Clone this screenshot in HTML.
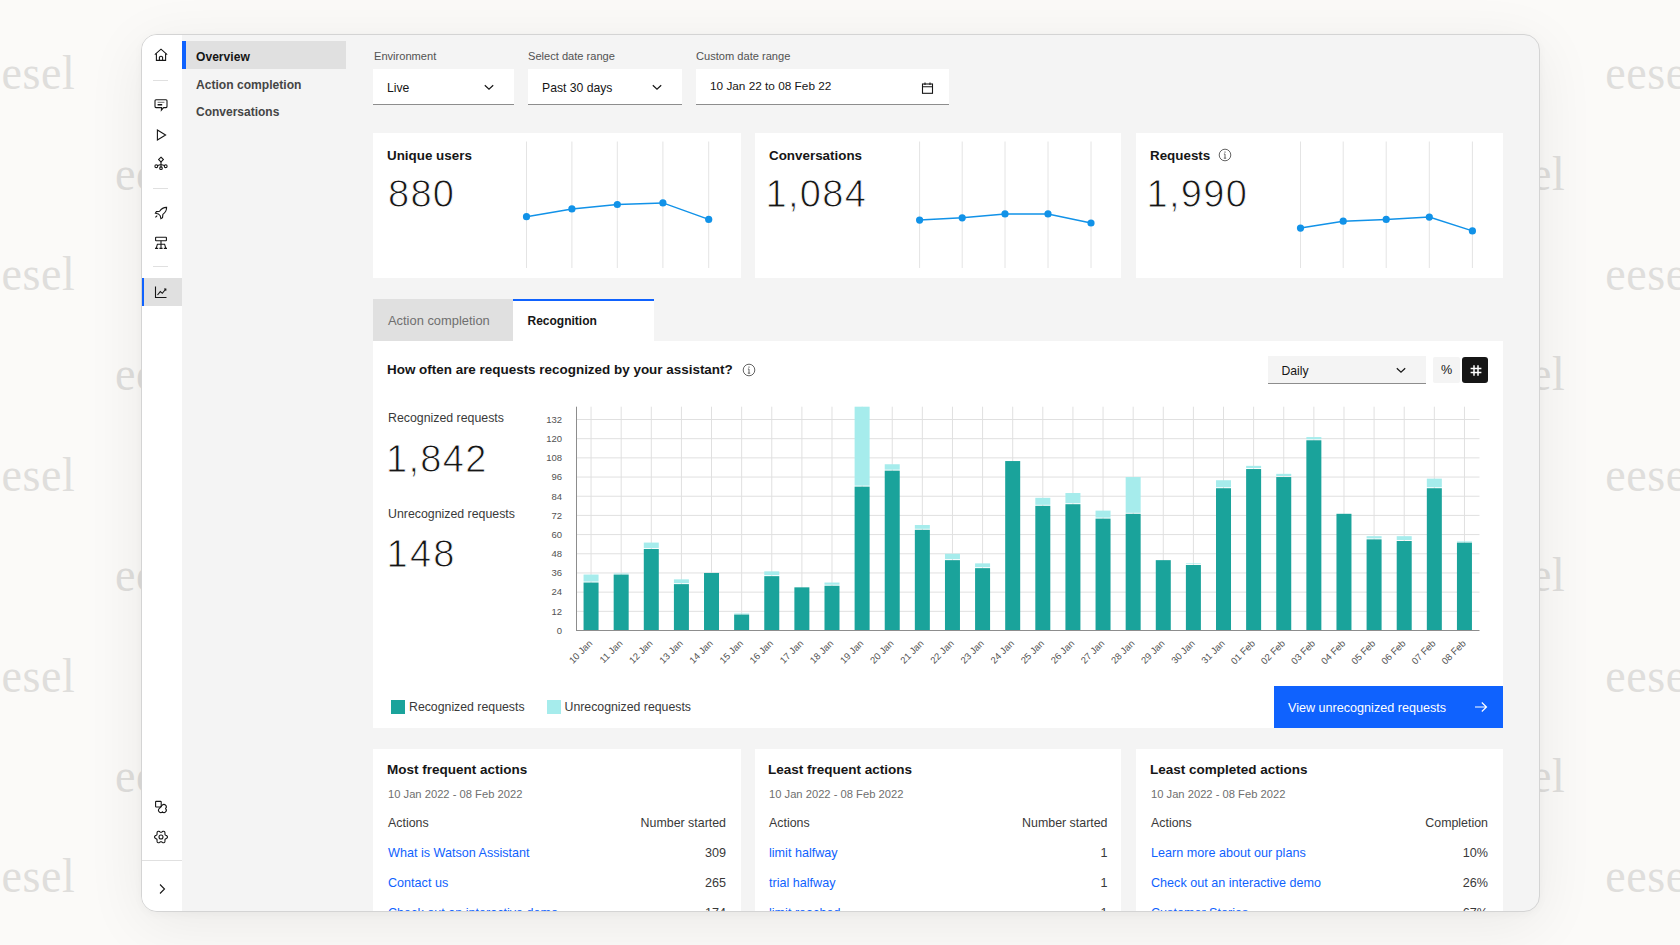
<!DOCTYPE html><html><head><meta charset="utf-8"><style>
*{margin:0;padding:0;box-sizing:border-box}
html,body{width:1680px;height:945px;overflow:hidden}
body{background:#fbfaf8;font-family:"Liberation Sans", sans-serif;position:relative;color:#161616}
.a{position:absolute;white-space:nowrap}
.wm{position:absolute;font-family:"Liberation Serif",serif;font-size:46px;color:#dfdedc;line-height:1;white-space:nowrap;transform:scaleY(1.05);transform-origin:0 37px;letter-spacing:0.6px}
#win{position:absolute;left:141px;top:34px;width:1399px;height:878px;border:1px solid #d4d4d4;border-radius:16px;overflow:hidden;background:#f4f4f4;
  box-shadow:0 12px 60px rgba(0,0,0,0.07), 0 2px 10px rgba(0,0,0,0.03)}
#win .a{}
.t{position:absolute;white-space:nowrap;line-height:1}
</style></head><body>
<div class="wm" style="left:-19.5px;top:51.2px">eesel</div>
<div class="wm" style="left:251.3px;top:51.2px">eesel</div>
<div class="wm" style="left:522.1px;top:51.2px">eesel</div>
<div class="wm" style="left:792.9px;top:51.2px">eesel</div>
<div class="wm" style="left:1063.7px;top:51.2px">eesel</div>
<div class="wm" style="left:1334.5px;top:51.2px">eesel</div>
<div class="wm" style="left:1605.3px;top:51.2px">eesel</div>
<div class="wm" style="left:115.0px;top:151.60000000000002px">eesel</div>
<div class="wm" style="left:386.1px;top:151.60000000000002px">eesel</div>
<div class="wm" style="left:657.2px;top:151.60000000000002px">eesel</div>
<div class="wm" style="left:928.3px;top:151.60000000000002px">eesel</div>
<div class="wm" style="left:1199.4px;top:151.60000000000002px">eesel</div>
<div class="wm" style="left:1470.5px;top:151.60000000000002px">eesel</div>
<div class="wm" style="left:-19.5px;top:252.0px">eesel</div>
<div class="wm" style="left:251.3px;top:252.0px">eesel</div>
<div class="wm" style="left:522.1px;top:252.0px">eesel</div>
<div class="wm" style="left:792.9px;top:252.0px">eesel</div>
<div class="wm" style="left:1063.7px;top:252.0px">eesel</div>
<div class="wm" style="left:1334.5px;top:252.0px">eesel</div>
<div class="wm" style="left:1605.3px;top:252.0px">eesel</div>
<div class="wm" style="left:115.0px;top:352.40000000000003px">eesel</div>
<div class="wm" style="left:386.1px;top:352.40000000000003px">eesel</div>
<div class="wm" style="left:657.2px;top:352.40000000000003px">eesel</div>
<div class="wm" style="left:928.3px;top:352.40000000000003px">eesel</div>
<div class="wm" style="left:1199.4px;top:352.40000000000003px">eesel</div>
<div class="wm" style="left:1470.5px;top:352.40000000000003px">eesel</div>
<div class="wm" style="left:-19.5px;top:452.8px">eesel</div>
<div class="wm" style="left:251.3px;top:452.8px">eesel</div>
<div class="wm" style="left:522.1px;top:452.8px">eesel</div>
<div class="wm" style="left:792.9px;top:452.8px">eesel</div>
<div class="wm" style="left:1063.7px;top:452.8px">eesel</div>
<div class="wm" style="left:1334.5px;top:452.8px">eesel</div>
<div class="wm" style="left:1605.3px;top:452.8px">eesel</div>
<div class="wm" style="left:115.0px;top:553.2px">eesel</div>
<div class="wm" style="left:386.1px;top:553.2px">eesel</div>
<div class="wm" style="left:657.2px;top:553.2px">eesel</div>
<div class="wm" style="left:928.3px;top:553.2px">eesel</div>
<div class="wm" style="left:1199.4px;top:553.2px">eesel</div>
<div class="wm" style="left:1470.5px;top:553.2px">eesel</div>
<div class="wm" style="left:-19.5px;top:653.6000000000001px">eesel</div>
<div class="wm" style="left:251.3px;top:653.6000000000001px">eesel</div>
<div class="wm" style="left:522.1px;top:653.6000000000001px">eesel</div>
<div class="wm" style="left:792.9px;top:653.6000000000001px">eesel</div>
<div class="wm" style="left:1063.7px;top:653.6000000000001px">eesel</div>
<div class="wm" style="left:1334.5px;top:653.6000000000001px">eesel</div>
<div class="wm" style="left:1605.3px;top:653.6000000000001px">eesel</div>
<div class="wm" style="left:115.0px;top:754.0000000000001px">eesel</div>
<div class="wm" style="left:386.1px;top:754.0000000000001px">eesel</div>
<div class="wm" style="left:657.2px;top:754.0000000000001px">eesel</div>
<div class="wm" style="left:928.3px;top:754.0000000000001px">eesel</div>
<div class="wm" style="left:1199.4px;top:754.0000000000001px">eesel</div>
<div class="wm" style="left:1470.5px;top:754.0000000000001px">eesel</div>
<div class="wm" style="left:-19.5px;top:854.4000000000001px">eesel</div>
<div class="wm" style="left:251.3px;top:854.4000000000001px">eesel</div>
<div class="wm" style="left:522.1px;top:854.4000000000001px">eesel</div>
<div class="wm" style="left:792.9px;top:854.4000000000001px">eesel</div>
<div class="wm" style="left:1063.7px;top:854.4000000000001px">eesel</div>
<div class="wm" style="left:1334.5px;top:854.4000000000001px">eesel</div>
<div class="wm" style="left:1605.3px;top:854.4000000000001px">eesel</div>
<div class="wm" style="left:115.0px;top:954.8000000000001px">eesel</div>
<div class="wm" style="left:386.1px;top:954.8000000000001px">eesel</div>
<div class="wm" style="left:657.2px;top:954.8000000000001px">eesel</div>
<div class="wm" style="left:928.3px;top:954.8000000000001px">eesel</div>
<div class="wm" style="left:1199.4px;top:954.8000000000001px">eesel</div>
<div class="wm" style="left:1470.5px;top:954.8000000000001px">eesel</div>
<div id="win">
<div class="a" style="left:0px;top:0px;width:40px;height:877px;background:#ffffff;"></div>
<div class="a" style="left:2px;top:243px;width:38px;height:28px;background:#e0e0e0;"></div>
<div class="a" style="left:0px;top:243px;width:2px;height:28px;background:#0f62fe;"></div>
<div class="a" style="left:11px;top:45px;width:15px;height:1px;background:#e0e0e0;"></div>
<div class="a" style="left:11px;top:153px;width:15px;height:1px;background:#e0e0e0;"></div>
<div class="a" style="left:11px;top:231px;width:15px;height:1px;background:#e0e0e0;"></div>
<div class="a" style="left:0px;top:825px;width:40px;height:1px;background:#e0e0e0;"></div>
<svg class="a" style="left:11.0px;top:12.0px" width="16" height="16" viewBox="0 0 16 16" fill="none" stroke="#161616" stroke-width="1.1"><path d="M1.8 7.6 L8 2.2 L14.2 7.6"/><path d="M3.4 6.4 V13.4 H12.6 V6.4"/><path d="M6.4 13.4 V10.2 Q8 8.2 9.6 10.2 V13.4"/></svg>
<svg class="a" style="left:11.0px;top:62.0px" width="16" height="16" viewBox="0 0 16 16" fill="none" stroke="#161616" stroke-width="1.1"><path d="M3 2.8 H13 Q14 2.8 14 3.8 V9.6 Q14 10.6 13 10.6 H10.6 L8.4 13.2 L8.6 10.6 H3 Q2 10.6 2 9.6 V3.8 Q2 2.8 3 2.8 Z"/><path d="M4.6 5.4 H11.4" stroke="#8d8d8d"/><path d="M4.6 7.8 H9.2" stroke-width="1.4"/></svg>
<svg class="a" style="left:11.0px;top:92.0px" width="16" height="16" viewBox="0 0 16 16" fill="none" stroke="#161616" stroke-width="1.1"><path d="M4.4 3 L12.6 8 L4.4 13 Z"/></svg>
<svg class="a" style="left:11.0px;top:120.0px" width="16" height="16" viewBox="0 0 16 16" fill="none" stroke="#161616" stroke-width="1.1"><path d="M8 2.2 L10.4 4.6 L8 7 L5.6 4.6 Z"/><path d="M8 7 V12.5 M8 9.5 L3.8 10.8 M8 9.5 L12.2 10.8"/><circle cx="3.3" cy="11.2" r="1.4"/><circle cx="12.7" cy="11.2" r="1.4"/><circle cx="8" cy="13.2" r="1.3"/></svg>
<svg class="a" style="left:11.0px;top:170.0px" width="16" height="16" viewBox="0 0 16 16" fill="none" stroke="#161616" stroke-width="1.1"><path d="M13.6 2.4 Q9.5 2.2 6.6 6.2 L3.4 6.6 L2.4 8.2 L5.4 8.9 L7.2 10.7 L7.9 13.6 L9.5 12.6 L9.9 9.4 Q13.8 6.5 13.6 2.4 Z"/><path d="M2.4 12.4 L4.2 10.6"/></svg>
<svg class="a" style="left:11.0px;top:200.0px" width="16" height="16" viewBox="0 0 16 16" fill="none" stroke="#161616" stroke-width="1.1"><rect x="2.6" y="2.3" width="10.8" height="3.4" rx="0.5"/><path d="M8 5.7 V13.4"/><path d="M3.2 13.4 L4.4 9.2 H11.6 L12.8 13.4"/><path d="M2 13.4 H5.2 M6.4 13.4 H9.6 M10.8 13.4 H14"/></svg>
<svg class="a" style="left:11.0px;top:249.0px" width="16" height="16" viewBox="0 0 16 16" fill="none" stroke="#161616" stroke-width="1.1"><path d="M2.5 2.5 V13.5 H13.5"/><path d="M4.5 11 L7.3 7.6 L9.3 9.3 L12.8 5"/><path d="M11 5 H12.8 V6.8"/></svg>
<svg class="a" style="left:11.0px;top:764.0px" width="16" height="16" viewBox="0 0 16 16" fill="none" stroke="#161616" stroke-width="1.1"><rect x="2.6" y="2.4" width="5.6" height="5.6" rx="0.6"/><path d="M9.2 6.2 Q11 4.6 12.6 6.2 Q14.2 8 12.6 9.6 Q14.2 11.2 12.6 12.8 Q11 14.4 9.4 12.8 Q7.8 14.4 6.2 12.8 Q4.6 11.2 6.2 9.6 Q7.8 8 9.2 6.2 Z"/></svg>
<svg class="a" style="left:11.0px;top:794.0px" width="16" height="16" viewBox="0 0 16 16" fill="none" stroke="#161616" stroke-width="1.1"><path d="M14.50 8.00 L14.36 8.56 L13.96 9.05 L13.41 9.45 L12.84 9.76 L12.37 10.04 L12.07 10.35 L11.95 10.76 L11.95 11.31 L11.96 11.96 L11.89 12.63 L11.66 13.23 L11.25 13.63 L10.70 13.78 L10.07 13.69 L9.45 13.41 L8.89 13.07 L8.42 12.80 L8.00 12.70 L7.58 12.80 L7.11 13.07 L6.55 13.41 L5.93 13.69 L5.30 13.78 L4.75 13.63 L4.34 13.23 L4.11 12.63 L4.04 11.96 L4.05 11.31 L4.05 10.76 L3.93 10.35 L3.63 10.04 L3.16 9.76 L2.59 9.45 L2.04 9.05 L1.64 8.56 L1.50 8.00 L1.64 7.44 L2.04 6.95 L2.59 6.55 L3.16 6.24 L3.63 5.96 L3.93 5.65 L4.05 5.24 L4.05 4.69 L4.04 4.04 L4.11 3.37 L4.34 2.77 L4.75 2.37 L5.30 2.22 L5.93 2.31 L6.55 2.59 L7.11 2.93 L7.58 3.20 L8.00 3.30 L8.42 3.20 L8.89 2.93 L9.45 2.59 L10.07 2.31 L10.70 2.22 L11.25 2.37 L11.66 2.77 L11.89 3.37 L11.96 4.04 L11.95 4.69 L11.95 5.24 L12.07 5.65 L12.37 5.96 L12.84 6.24 L13.41 6.55 L13.96 6.95 L14.36 7.44 Z"/><circle cx="8" cy="8" r="2"/></svg>
<svg class="a" style="left:12.0px;top:846.0px" width="16" height="16" viewBox="0 0 16 16" fill="none" stroke="#161616" stroke-width="1.1"><path d="M6 3.5 L10.5 8 L6 12.5"/></svg>
<div class="a" style="left:44px;top:6px;width:160px;height:28px;background:#e0e0e0;"></div>
<div class="a" style="left:40px;top:6px;width:4px;height:28px;background:#0f62fe;"></div>
<div class="t" style="left:54.00px;top:15.76px;font-size:12.1px;color:#161616;font-weight:bold;">Overview</div>
<div class="t" style="left:54.00px;top:43.76px;font-size:12.1px;color:#454545;font-weight:bold;">Action completion</div>
<div class="t" style="left:54.00px;top:70.84px;font-size:12px;color:#454545;font-weight:bold;">Conversations</div>
<div class="t" style="left:232.00px;top:15.60px;font-size:11.1px;color:#525252;font-weight:normal;">Environment</div>
<div class="t" style="left:386.00px;top:15.60px;font-size:11.1px;color:#525252;font-weight:normal;">Select date range</div>
<div class="t" style="left:554.00px;top:15.60px;font-size:11.1px;color:#525252;font-weight:normal;">Custom date range</div>
<div class="a" style="left:231px;top:34px;width:141px;height:36px;background:#ffffff;border-bottom:1px solid #8d8d8d"></div>
<div class="a" style="left:386px;top:34px;width:154px;height:36px;background:#ffffff;border-bottom:1px solid #8d8d8d"></div>
<div class="a" style="left:554px;top:34px;width:253px;height:36px;background:#ffffff;border-bottom:1px solid #8d8d8d"></div>
<div class="t" style="left:245.00px;top:46.67px;font-size:12.2px;color:#161616;font-weight:normal;">Live</div>
<div class="t" style="left:400.00px;top:46.67px;font-size:12.2px;color:#161616;font-weight:normal;">Past 30 days</div>
<div class="t" style="left:568.00px;top:46.01px;font-size:11.8px;color:#161616;font-weight:normal;">10 Jan 22 to 08 Feb 22</div>
<svg class="a" style="left:342.0px;top:47.0px" width="10" height="10" viewBox="0 0 10 10" fill="none" stroke="#161616" stroke-width="1.2"><path d="M0.8 3.2 L5 7.2 L9.2 3.2"/></svg>
<svg class="a" style="left:510.0px;top:47.0px" width="10" height="10" viewBox="0 0 10 10" fill="none" stroke="#161616" stroke-width="1.2"><path d="M0.8 3.2 L5 7.2 L9.2 3.2"/></svg>
<svg class="a" style="left:779px;top:47px" width="13" height="12" viewBox="0 0 13 12" fill="none" stroke="#161616" stroke-width="1.1"><rect x="1.5" y="2" width="10" height="9.3"/><path d="M1.5 4.8 H11.5 M4 0.5 V3 M9 0.5 V3"/></svg>
<div class="a" style="left:231px;top:98px;width:368px;height:145px;background:#ffffff;"></div>
<div class="t" style="left:245.00px;top:114.46px;font-size:13.4px;color:#161616;font-weight:bold;">Unique users</div>
<div class="t" style="left:246.00px;top:139.53px;font-size:38px;color:#161616;font-weight:normal;letter-spacing:1.3px;-webkit-text-stroke:0.9px #fff">880</div>
<svg class="a" style="left:231px;top:98px" width="368" height="145" viewBox="373 133 368 145"><line x1="526.5" y1="141.5" x2="526.5" y2="268" stroke="#e4e4e4" stroke-width="1"/><line x1="571.9" y1="141.5" x2="571.9" y2="268" stroke="#e4e4e4" stroke-width="1"/><line x1="617.3" y1="141.5" x2="617.3" y2="268" stroke="#e4e4e4" stroke-width="1"/><line x1="662.9" y1="141.5" x2="662.9" y2="268" stroke="#e4e4e4" stroke-width="1"/><line x1="708.7" y1="141.5" x2="708.7" y2="268" stroke="#e4e4e4" stroke-width="1"/><polyline points="526.5,216.7 571.9,208.9 617.3,204.5 662.9,202.9 708.7,219.4" fill="none" stroke="#1192e8" stroke-width="1.5"/><circle cx="526.5" cy="216.7" r="3.6" fill="#1192e8"/><circle cx="571.9" cy="208.9" r="3.6" fill="#1192e8"/><circle cx="617.3" cy="204.5" r="3.6" fill="#1192e8"/><circle cx="662.9" cy="202.9" r="3.6" fill="#1192e8"/><circle cx="708.7" cy="219.4" r="3.6" fill="#1192e8"/></svg>
<div class="a" style="left:613px;top:98px;width:366px;height:145px;background:#ffffff;"></div>
<div class="t" style="left:627.00px;top:114.46px;font-size:13.4px;color:#161616;font-weight:bold;">Conversations</div>
<div class="t" style="left:623.50px;top:139.53px;font-size:38px;color:#161616;font-weight:normal;letter-spacing:1.3px;-webkit-text-stroke:0.9px #fff">1,084</div>
<svg class="a" style="left:613px;top:98px" width="366" height="145" viewBox="755 133 366 145"><line x1="919.6" y1="141.5" x2="919.6" y2="268" stroke="#e4e4e4" stroke-width="1"/><line x1="962.2" y1="141.5" x2="962.2" y2="268" stroke="#e4e4e4" stroke-width="1"/><line x1="1005" y1="141.5" x2="1005" y2="268" stroke="#e4e4e4" stroke-width="1"/><line x1="1048" y1="141.5" x2="1048" y2="268" stroke="#e4e4e4" stroke-width="1"/><line x1="1091" y1="141.5" x2="1091" y2="268" stroke="#e4e4e4" stroke-width="1"/><polyline points="919.6,220.1 962.2,217.8 1005,213.9 1048,213.9 1091,223" fill="none" stroke="#1192e8" stroke-width="1.5"/><circle cx="919.6" cy="220.1" r="3.6" fill="#1192e8"/><circle cx="962.2" cy="217.8" r="3.6" fill="#1192e8"/><circle cx="1005" cy="213.9" r="3.6" fill="#1192e8"/><circle cx="1048" cy="213.9" r="3.6" fill="#1192e8"/><circle cx="1091" cy="223" r="3.6" fill="#1192e8"/></svg>
<div class="a" style="left:994px;top:98px;width:367px;height:145px;background:#ffffff;"></div>
<div class="t" style="left:1008.00px;top:114.46px;font-size:13.4px;color:#161616;font-weight:bold;">Requests</div>
<div class="t" style="left:1004.50px;top:139.53px;font-size:38px;color:#161616;font-weight:normal;letter-spacing:1.3px;-webkit-text-stroke:0.9px #fff">1,990</div>
<svg class="a" style="left:994px;top:98px" width="367" height="145" viewBox="1136 133 367 145"><line x1="1300.5" y1="141.5" x2="1300.5" y2="268" stroke="#e4e4e4" stroke-width="1"/><line x1="1343.2" y1="141.5" x2="1343.2" y2="268" stroke="#e4e4e4" stroke-width="1"/><line x1="1386.2" y1="141.5" x2="1386.2" y2="268" stroke="#e4e4e4" stroke-width="1"/><line x1="1429.3" y1="141.5" x2="1429.3" y2="268" stroke="#e4e4e4" stroke-width="1"/><line x1="1472.4" y1="141.5" x2="1472.4" y2="268" stroke="#e4e4e4" stroke-width="1"/><polyline points="1300.5,228.1 1343.2,221.2 1386.2,219.4 1429.3,217.1 1472.4,230.9" fill="none" stroke="#1192e8" stroke-width="1.5"/><circle cx="1300.5" cy="228.1" r="3.6" fill="#1192e8"/><circle cx="1343.2" cy="221.2" r="3.6" fill="#1192e8"/><circle cx="1386.2" cy="219.4" r="3.6" fill="#1192e8"/><circle cx="1429.3" cy="217.1" r="3.6" fill="#1192e8"/><circle cx="1472.4" cy="230.9" r="3.6" fill="#1192e8"/></svg>
<svg class="a" style="left:1076px;top:113px" width="14" height="14" viewBox="0 0 14 14" fill="none" stroke="#525252" stroke-width="0.9"><circle cx="7" cy="7" r="5.8"/><path d="M7 6 V10.2 M5.8 10.2 H8.2 M5.9 6 H7"/><circle cx="7" cy="4" r="0.6" fill="#161616" stroke="none"/></svg>
<div class="a" style="left:231px;top:264px;width:140px;height:42px;background:#e0e0e0;"></div>
<div class="a" style="left:371px;top:264px;width:141px;height:42px;background:#ffffff;border-top:2px solid #0f62fe"></div>
<div class="t" style="left:246.00px;top:279.88px;font-size:12.9px;color:#6f6f6f;font-weight:normal;">Action completion</div>
<div class="t" style="left:385.50px;top:279.84px;font-size:12.0px;color:#161616;font-weight:bold;">Recognition</div>
<div class="a" style="left:231px;top:306px;width:1130px;height:387px;background:#ffffff;"></div>
<div class="t" style="left:245.00px;top:327.91px;font-size:13.45px;color:#161616;font-weight:bold;">How often are requests recognized by your assistant?</div>
<svg class="a" style="left:599.5px;top:328px" width="14" height="14" viewBox="0 0 14 14" fill="none" stroke="#525252" stroke-width="0.9"><circle cx="7" cy="7" r="5.8"/><path d="M7 6 V10.2 M5.8 10.2 H8.2 M5.9 6 H7"/><circle cx="7" cy="4" r="0.6" fill="#161616" stroke="none"/></svg>
<div class="a" style="left:1126px;top:321px;width:158px;height:28px;background:#f4f4f4;border-bottom:1px solid #8d8d8d"></div>
<div class="t" style="left:1139.50px;top:329.67px;font-size:12.2px;color:#161616;font-weight:normal;">Daily</div>
<svg class="a" style="left:1254.0px;top:330.0px" width="10" height="10" viewBox="0 0 10 10" fill="none" stroke="#161616" stroke-width="1.2"><path d="M0.8 3.2 L5 7.2 L9.2 3.2"/></svg>
<div class="a" style="left:1291px;top:322px;width:27px;height:26px;background:#f4f4f4;border-radius:2px"></div>
<div class="a" style="left:1320px;top:322px;width:26px;height:26px;background:#161616;border-radius:3px"></div>
<div class="t" style="left:1299.00px;top:329.33px;font-size:12.6px;color:#161616;font-weight:normal;">%</div>
<svg class="a" style="left:1328px;top:330px" width="12" height="11" viewBox="0 0 12 11" fill="none" stroke="#ffffff" stroke-width="1.5"><path d="M4 0.3 V10.7 M8 0.3 V10.7 M0.6 3.5 H11.4 M0.6 7.5 H11.4"/></svg>
<div class="t" style="left:246.00px;top:376.75px;font-size:12.35px;color:#393939;font-weight:normal;">Recognized requests</div>
<div class="t" style="left:244.00px;top:405.03px;font-size:38px;color:#161616;font-weight:normal;letter-spacing:1.3px;-webkit-text-stroke:0.9px #fff">1,842</div>
<div class="t" style="left:246.00px;top:472.75px;font-size:12.35px;color:#393939;font-weight:normal;">Unrecognized requests</div>
<div class="t" style="left:244.50px;top:499.63px;font-size:38px;color:#161616;font-weight:normal;letter-spacing:2.3px;-webkit-text-stroke:0.9px #fff">148</div>
<svg class="a" style="left:0px;top:0px" width="1399" height="878" viewBox="142 35 1399 878"><line x1="576" y1="611.32" x2="1479.5" y2="611.32" stroke="#e0e0e0" stroke-width="1"/><line x1="576" y1="592.13" x2="1479.5" y2="592.13" stroke="#e0e0e0" stroke-width="1"/><line x1="576" y1="572.95" x2="1479.5" y2="572.95" stroke="#e0e0e0" stroke-width="1"/><line x1="576" y1="553.77" x2="1479.5" y2="553.77" stroke="#e0e0e0" stroke-width="1"/><line x1="576" y1="534.59" x2="1479.5" y2="534.59" stroke="#e0e0e0" stroke-width="1"/><line x1="576" y1="515.40" x2="1479.5" y2="515.40" stroke="#e0e0e0" stroke-width="1"/><line x1="576" y1="496.22" x2="1479.5" y2="496.22" stroke="#e0e0e0" stroke-width="1"/><line x1="576" y1="477.04" x2="1479.5" y2="477.04" stroke="#e0e0e0" stroke-width="1"/><line x1="576" y1="457.85" x2="1479.5" y2="457.85" stroke="#e0e0e0" stroke-width="1"/><line x1="576" y1="438.67" x2="1479.5" y2="438.67" stroke="#e0e0e0" stroke-width="1"/><line x1="576" y1="419.49" x2="1479.5" y2="419.49" stroke="#e0e0e0" stroke-width="1"/><line x1="591.06" y1="406.7" x2="591.06" y2="630.5" stroke="#e0e0e0" stroke-width="1"/><line x1="621.17" y1="406.7" x2="621.17" y2="630.5" stroke="#e0e0e0" stroke-width="1"/><line x1="651.29" y1="406.7" x2="651.29" y2="630.5" stroke="#e0e0e0" stroke-width="1"/><line x1="681.41" y1="406.7" x2="681.41" y2="630.5" stroke="#e0e0e0" stroke-width="1"/><line x1="711.52" y1="406.7" x2="711.52" y2="630.5" stroke="#e0e0e0" stroke-width="1"/><line x1="741.64" y1="406.7" x2="741.64" y2="630.5" stroke="#e0e0e0" stroke-width="1"/><line x1="771.76" y1="406.7" x2="771.76" y2="630.5" stroke="#e0e0e0" stroke-width="1"/><line x1="801.88" y1="406.7" x2="801.88" y2="630.5" stroke="#e0e0e0" stroke-width="1"/><line x1="831.99" y1="406.7" x2="831.99" y2="630.5" stroke="#e0e0e0" stroke-width="1"/><line x1="862.11" y1="406.7" x2="862.11" y2="630.5" stroke="#e0e0e0" stroke-width="1"/><line x1="892.23" y1="406.7" x2="892.23" y2="630.5" stroke="#e0e0e0" stroke-width="1"/><line x1="922.34" y1="406.7" x2="922.34" y2="630.5" stroke="#e0e0e0" stroke-width="1"/><line x1="952.46" y1="406.7" x2="952.46" y2="630.5" stroke="#e0e0e0" stroke-width="1"/><line x1="982.58" y1="406.7" x2="982.58" y2="630.5" stroke="#e0e0e0" stroke-width="1"/><line x1="1012.69" y1="406.7" x2="1012.69" y2="630.5" stroke="#e0e0e0" stroke-width="1"/><line x1="1042.81" y1="406.7" x2="1042.81" y2="630.5" stroke="#e0e0e0" stroke-width="1"/><line x1="1072.92" y1="406.7" x2="1072.92" y2="630.5" stroke="#e0e0e0" stroke-width="1"/><line x1="1103.04" y1="406.7" x2="1103.04" y2="630.5" stroke="#e0e0e0" stroke-width="1"/><line x1="1133.16" y1="406.7" x2="1133.16" y2="630.5" stroke="#e0e0e0" stroke-width="1"/><line x1="1163.28" y1="406.7" x2="1163.28" y2="630.5" stroke="#e0e0e0" stroke-width="1"/><line x1="1193.39" y1="406.7" x2="1193.39" y2="630.5" stroke="#e0e0e0" stroke-width="1"/><line x1="1223.51" y1="406.7" x2="1223.51" y2="630.5" stroke="#e0e0e0" stroke-width="1"/><line x1="1253.62" y1="406.7" x2="1253.62" y2="630.5" stroke="#e0e0e0" stroke-width="1"/><line x1="1283.74" y1="406.7" x2="1283.74" y2="630.5" stroke="#e0e0e0" stroke-width="1"/><line x1="1313.86" y1="406.7" x2="1313.86" y2="630.5" stroke="#e0e0e0" stroke-width="1"/><line x1="1343.97" y1="406.7" x2="1343.97" y2="630.5" stroke="#e0e0e0" stroke-width="1"/><line x1="1374.09" y1="406.7" x2="1374.09" y2="630.5" stroke="#e0e0e0" stroke-width="1"/><line x1="1404.21" y1="406.7" x2="1404.21" y2="630.5" stroke="#e0e0e0" stroke-width="1"/><line x1="1434.33" y1="406.7" x2="1434.33" y2="630.5" stroke="#e0e0e0" stroke-width="1"/><line x1="1464.44" y1="406.7" x2="1464.44" y2="630.5" stroke="#e0e0e0" stroke-width="1"/><rect x="583.56" y="582.54" width="15" height="47.96" fill="#1aa39b"/><rect x="583.56" y="574.55" width="15" height="6.99" fill="#a6ecec"/><rect x="613.67" y="574.55" width="15" height="55.95" fill="#1aa39b"/><rect x="613.67" y="572.95" width="15" height="0.60" fill="#a6ecec"/><rect x="643.79" y="548.97" width="15" height="81.53" fill="#1aa39b"/><rect x="643.79" y="542.58" width="15" height="5.39" fill="#a6ecec"/><rect x="673.91" y="584.14" width="15" height="46.36" fill="#1aa39b"/><rect x="673.91" y="579.35" width="15" height="3.80" fill="#a6ecec"/><rect x="704.02" y="572.95" width="15" height="57.55" fill="#1aa39b"/><rect x="734.14" y="614.51" width="15" height="15.99" fill="#1aa39b"/><rect x="734.14" y="612.92" width="15" height="0.60" fill="#a6ecec"/><rect x="764.26" y="576.15" width="15" height="54.35" fill="#1aa39b"/><rect x="764.26" y="571.35" width="15" height="3.80" fill="#a6ecec"/><rect x="794.38" y="587.34" width="15" height="43.16" fill="#1aa39b"/><rect x="824.49" y="585.74" width="15" height="44.76" fill="#1aa39b"/><rect x="824.49" y="582.54" width="15" height="2.20" fill="#a6ecec"/><rect x="854.61" y="486.63" width="15" height="143.87" fill="#1aa39b"/><rect x="854.61" y="406.70" width="15" height="78.93" fill="#a6ecec"/><rect x="884.73" y="470.64" width="15" height="159.86" fill="#1aa39b"/><rect x="884.73" y="464.25" width="15" height="5.39" fill="#a6ecec"/><rect x="914.84" y="529.79" width="15" height="100.71" fill="#1aa39b"/><rect x="914.84" y="524.99" width="15" height="3.80" fill="#a6ecec"/><rect x="944.96" y="560.16" width="15" height="70.34" fill="#1aa39b"/><rect x="944.96" y="553.77" width="15" height="5.39" fill="#a6ecec"/><rect x="975.08" y="568.16" width="15" height="62.34" fill="#1aa39b"/><rect x="975.08" y="563.36" width="15" height="3.80" fill="#a6ecec"/><rect x="1005.19" y="461.05" width="15" height="169.45" fill="#1aa39b"/><rect x="1035.31" y="505.81" width="15" height="124.69" fill="#1aa39b"/><rect x="1035.31" y="497.82" width="15" height="6.99" fill="#a6ecec"/><rect x="1065.42" y="504.21" width="15" height="126.29" fill="#1aa39b"/><rect x="1065.42" y="493.02" width="15" height="10.19" fill="#a6ecec"/><rect x="1095.54" y="518.60" width="15" height="111.90" fill="#1aa39b"/><rect x="1095.54" y="510.61" width="15" height="6.99" fill="#a6ecec"/><rect x="1125.66" y="513.80" width="15" height="116.70" fill="#1aa39b"/><rect x="1125.66" y="477.04" width="15" height="35.77" fill="#a6ecec"/><rect x="1155.78" y="560.16" width="15" height="70.34" fill="#1aa39b"/><rect x="1185.89" y="564.96" width="15" height="65.54" fill="#1aa39b"/><rect x="1185.89" y="563.36" width="15" height="0.60" fill="#a6ecec"/><rect x="1216.01" y="488.23" width="15" height="142.27" fill="#1aa39b"/><rect x="1216.01" y="480.23" width="15" height="6.99" fill="#a6ecec"/><rect x="1246.12" y="469.04" width="15" height="161.46" fill="#1aa39b"/><rect x="1246.12" y="465.85" width="15" height="2.20" fill="#a6ecec"/><rect x="1276.24" y="477.04" width="15" height="153.46" fill="#1aa39b"/><rect x="1276.24" y="473.84" width="15" height="2.20" fill="#a6ecec"/><rect x="1306.36" y="440.27" width="15" height="190.23" fill="#1aa39b"/><rect x="1306.36" y="437.07" width="15" height="2.20" fill="#a6ecec"/><rect x="1336.47" y="513.80" width="15" height="116.70" fill="#1aa39b"/><rect x="1366.59" y="539.38" width="15" height="91.12" fill="#1aa39b"/><rect x="1366.59" y="536.18" width="15" height="2.20" fill="#a6ecec"/><rect x="1396.71" y="540.98" width="15" height="89.52" fill="#1aa39b"/><rect x="1396.71" y="536.18" width="15" height="3.80" fill="#a6ecec"/><rect x="1426.83" y="488.23" width="15" height="142.27" fill="#1aa39b"/><rect x="1426.83" y="478.64" width="15" height="8.59" fill="#a6ecec"/><rect x="1456.94" y="542.58" width="15" height="87.92" fill="#1aa39b"/><rect x="1456.94" y="540.98" width="15" height="0.60" fill="#a6ecec"/><line x1="576.5" y1="406.7" x2="576.5" y2="630.5" stroke="#8d8d8d" stroke-width="1"/><line x1="576" y1="630.5" x2="1479.5" y2="630.5" stroke="#8d8d8d" stroke-width="1"/><text x="562" y="633.80" text-anchor="end" font-family="Liberation Sans" font-size="9.5" fill="#525252">0</text><text x="562" y="614.62" text-anchor="end" font-family="Liberation Sans" font-size="9.5" fill="#525252">12</text><text x="562" y="595.43" text-anchor="end" font-family="Liberation Sans" font-size="9.5" fill="#525252">24</text><text x="562" y="576.25" text-anchor="end" font-family="Liberation Sans" font-size="9.5" fill="#525252">36</text><text x="562" y="557.07" text-anchor="end" font-family="Liberation Sans" font-size="9.5" fill="#525252">48</text><text x="562" y="537.89" text-anchor="end" font-family="Liberation Sans" font-size="9.5" fill="#525252">60</text><text x="562" y="518.70" text-anchor="end" font-family="Liberation Sans" font-size="9.5" fill="#525252">72</text><text x="562" y="499.52" text-anchor="end" font-family="Liberation Sans" font-size="9.5" fill="#525252">84</text><text x="562" y="480.34" text-anchor="end" font-family="Liberation Sans" font-size="9.5" fill="#525252">96</text><text x="562" y="461.15" text-anchor="end" font-family="Liberation Sans" font-size="9.5" fill="#525252">108</text><text x="562" y="441.97" text-anchor="end" font-family="Liberation Sans" font-size="9.5" fill="#525252">120</text><text x="562" y="422.79" text-anchor="end" font-family="Liberation Sans" font-size="9.5" fill="#525252">132</text><text x="593.06" y="644.00" text-anchor="end" transform="rotate(-45 593.06 644.00)" font-family="Liberation Sans" font-size="9.5" fill="#525252">10 Jan</text><text x="623.17" y="644.00" text-anchor="end" transform="rotate(-45 623.17 644.00)" font-family="Liberation Sans" font-size="9.5" fill="#525252">11 Jan</text><text x="653.29" y="644.00" text-anchor="end" transform="rotate(-45 653.29 644.00)" font-family="Liberation Sans" font-size="9.5" fill="#525252">12 Jan</text><text x="683.41" y="644.00" text-anchor="end" transform="rotate(-45 683.41 644.00)" font-family="Liberation Sans" font-size="9.5" fill="#525252">13 Jan</text><text x="713.52" y="644.00" text-anchor="end" transform="rotate(-45 713.52 644.00)" font-family="Liberation Sans" font-size="9.5" fill="#525252">14 Jan</text><text x="743.64" y="644.00" text-anchor="end" transform="rotate(-45 743.64 644.00)" font-family="Liberation Sans" font-size="9.5" fill="#525252">15 Jan</text><text x="773.76" y="644.00" text-anchor="end" transform="rotate(-45 773.76 644.00)" font-family="Liberation Sans" font-size="9.5" fill="#525252">16 Jan</text><text x="803.88" y="644.00" text-anchor="end" transform="rotate(-45 803.88 644.00)" font-family="Liberation Sans" font-size="9.5" fill="#525252">17 Jan</text><text x="833.99" y="644.00" text-anchor="end" transform="rotate(-45 833.99 644.00)" font-family="Liberation Sans" font-size="9.5" fill="#525252">18 Jan</text><text x="864.11" y="644.00" text-anchor="end" transform="rotate(-45 864.11 644.00)" font-family="Liberation Sans" font-size="9.5" fill="#525252">19 Jan</text><text x="894.23" y="644.00" text-anchor="end" transform="rotate(-45 894.23 644.00)" font-family="Liberation Sans" font-size="9.5" fill="#525252">20 Jan</text><text x="924.34" y="644.00" text-anchor="end" transform="rotate(-45 924.34 644.00)" font-family="Liberation Sans" font-size="9.5" fill="#525252">21 Jan</text><text x="954.46" y="644.00" text-anchor="end" transform="rotate(-45 954.46 644.00)" font-family="Liberation Sans" font-size="9.5" fill="#525252">22 Jan</text><text x="984.58" y="644.00" text-anchor="end" transform="rotate(-45 984.58 644.00)" font-family="Liberation Sans" font-size="9.5" fill="#525252">23 Jan</text><text x="1014.69" y="644.00" text-anchor="end" transform="rotate(-45 1014.69 644.00)" font-family="Liberation Sans" font-size="9.5" fill="#525252">24 Jan</text><text x="1044.81" y="644.00" text-anchor="end" transform="rotate(-45 1044.81 644.00)" font-family="Liberation Sans" font-size="9.5" fill="#525252">25 Jan</text><text x="1074.92" y="644.00" text-anchor="end" transform="rotate(-45 1074.92 644.00)" font-family="Liberation Sans" font-size="9.5" fill="#525252">26 Jan</text><text x="1105.04" y="644.00" text-anchor="end" transform="rotate(-45 1105.04 644.00)" font-family="Liberation Sans" font-size="9.5" fill="#525252">27 Jan</text><text x="1135.16" y="644.00" text-anchor="end" transform="rotate(-45 1135.16 644.00)" font-family="Liberation Sans" font-size="9.5" fill="#525252">28 Jan</text><text x="1165.28" y="644.00" text-anchor="end" transform="rotate(-45 1165.28 644.00)" font-family="Liberation Sans" font-size="9.5" fill="#525252">29 Jan</text><text x="1195.39" y="644.00" text-anchor="end" transform="rotate(-45 1195.39 644.00)" font-family="Liberation Sans" font-size="9.5" fill="#525252">30 Jan</text><text x="1225.51" y="644.00" text-anchor="end" transform="rotate(-45 1225.51 644.00)" font-family="Liberation Sans" font-size="9.5" fill="#525252">31 Jan</text><text x="1255.62" y="644.00" text-anchor="end" transform="rotate(-45 1255.62 644.00)" font-family="Liberation Sans" font-size="9.5" fill="#525252">01 Feb</text><text x="1285.74" y="644.00" text-anchor="end" transform="rotate(-45 1285.74 644.00)" font-family="Liberation Sans" font-size="9.5" fill="#525252">02 Feb</text><text x="1315.86" y="644.00" text-anchor="end" transform="rotate(-45 1315.86 644.00)" font-family="Liberation Sans" font-size="9.5" fill="#525252">03 Feb</text><text x="1345.97" y="644.00" text-anchor="end" transform="rotate(-45 1345.97 644.00)" font-family="Liberation Sans" font-size="9.5" fill="#525252">04 Feb</text><text x="1376.09" y="644.00" text-anchor="end" transform="rotate(-45 1376.09 644.00)" font-family="Liberation Sans" font-size="9.5" fill="#525252">05 Feb</text><text x="1406.21" y="644.00" text-anchor="end" transform="rotate(-45 1406.21 644.00)" font-family="Liberation Sans" font-size="9.5" fill="#525252">06 Feb</text><text x="1436.33" y="644.00" text-anchor="end" transform="rotate(-45 1436.33 644.00)" font-family="Liberation Sans" font-size="9.5" fill="#525252">07 Feb</text><text x="1466.44" y="644.00" text-anchor="end" transform="rotate(-45 1466.44 644.00)" font-family="Liberation Sans" font-size="9.5" fill="#525252">08 Feb</text></svg>
<div class="a" style="left:249px;top:665px;width:14px;height:14px;background:#1aa39b;"></div>
<div class="t" style="left:267.00px;top:666.29px;font-size:12.3px;color:#393939;font-weight:normal;">Recognized requests</div>
<div class="a" style="left:405px;top:665px;width:14px;height:14px;background:#a6ecec;"></div>
<div class="t" style="left:422.50px;top:666.29px;font-size:12.3px;color:#393939;font-weight:normal;">Unrecognized requests</div>
<div class="a" style="left:1132px;top:651px;width:229px;height:42px;background:#0f62fe;"></div>
<div class="t" style="left:1146.00px;top:666.53px;font-size:12.6px;color:#ffffff;font-weight:normal;">View unrecognized requests</div>
<svg class="a" style="left:1332px;top:666px" width="14" height="12" viewBox="0 0 14 12" fill="none" stroke="#ffffff" stroke-width="1.2"><path d="M1 6 H12.5 M7.8 1.5 L12.5 6 L7.8 10.5"/></svg>
<div class="a" style="left:231px;top:714px;width:368px;height:251px;background:#ffffff;"></div>
<div class="t" style="left:245.00px;top:728.17px;font-size:13.5px;color:#161616;font-weight:bold;">Most frequent actions</div>
<div class="t" style="left:246.00px;top:753.52px;font-size:11.2px;color:#6f6f6f;font-weight:normal;">10 Jan 2022 - 08 Feb 2022</div>
<div class="t" style="left:246.00px;top:781.60px;font-size:12.4px;color:#393939;font-weight:normal;">Actions</div>
<div class="t" style="right:813px;top:781.60px;font-size:12.4px;color:#393939">Number started</div>
<div class="t" style="left:246.00px;top:811.63px;font-size:12.6px;color:#0f62fe;font-weight:normal;">What is Watson Assistant</div>
<div class="t" style="right:813px;top:811.63px;font-size:12.6px;color:#393939">309</div>
<div class="t" style="left:246.00px;top:841.63px;font-size:12.6px;color:#0f62fe;font-weight:normal;">Contact us</div>
<div class="t" style="right:813px;top:841.63px;font-size:12.6px;color:#393939">265</div>
<div class="t" style="left:246.00px;top:871.63px;font-size:12.6px;color:#0f62fe;font-weight:normal;">Check out an interactive demo</div>
<div class="t" style="right:813px;top:871.63px;font-size:12.6px;color:#393939">174</div>
<div class="a" style="left:613px;top:714px;width:366px;height:251px;background:#ffffff;"></div>
<div class="t" style="left:626.00px;top:728.17px;font-size:13.5px;color:#161616;font-weight:bold;">Least frequent actions</div>
<div class="t" style="left:627.00px;top:753.52px;font-size:11.2px;color:#6f6f6f;font-weight:normal;">10 Jan 2022 - 08 Feb 2022</div>
<div class="t" style="left:627.00px;top:781.60px;font-size:12.4px;color:#393939;font-weight:normal;">Actions</div>
<div class="t" style="right:431.5px;top:781.60px;font-size:12.4px;color:#393939">Number started</div>
<div class="t" style="left:627.00px;top:811.63px;font-size:12.6px;color:#0f62fe;font-weight:normal;">limit halfway</div>
<div class="t" style="right:431.5px;top:811.63px;font-size:12.6px;color:#393939">1</div>
<div class="t" style="left:627.00px;top:841.63px;font-size:12.6px;color:#0f62fe;font-weight:normal;">trial halfway</div>
<div class="t" style="right:431.5px;top:841.63px;font-size:12.6px;color:#393939">1</div>
<div class="t" style="left:627.00px;top:871.63px;font-size:12.6px;color:#0f62fe;font-weight:normal;">limit reached</div>
<div class="t" style="right:431.5px;top:871.63px;font-size:12.6px;color:#393939">1</div>
<div class="a" style="left:994px;top:714px;width:367px;height:251px;background:#ffffff;"></div>
<div class="t" style="left:1008.00px;top:728.17px;font-size:13.5px;color:#161616;font-weight:bold;">Least completed actions</div>
<div class="t" style="left:1009.00px;top:753.52px;font-size:11.2px;color:#6f6f6f;font-weight:normal;">10 Jan 2022 - 08 Feb 2022</div>
<div class="t" style="left:1009.00px;top:781.60px;font-size:12.4px;color:#393939;font-weight:normal;">Actions</div>
<div class="t" style="right:51px;top:781.60px;font-size:12.4px;color:#393939">Completion</div>
<div class="t" style="left:1009.00px;top:811.63px;font-size:12.6px;color:#0f62fe;font-weight:normal;">Learn more about our plans</div>
<div class="t" style="right:51px;top:811.63px;font-size:12.6px;color:#393939">10%</div>
<div class="t" style="left:1009.00px;top:841.63px;font-size:12.6px;color:#0f62fe;font-weight:normal;">Check out an interactive demo</div>
<div class="t" style="right:51px;top:841.63px;font-size:12.6px;color:#393939">26%</div>
<div class="t" style="left:1009.00px;top:871.63px;font-size:12.6px;color:#0f62fe;font-weight:normal;">Customer Stories</div>
<div class="t" style="right:51px;top:871.63px;font-size:12.6px;color:#393939">67%</div>
</div>
</body></html>
